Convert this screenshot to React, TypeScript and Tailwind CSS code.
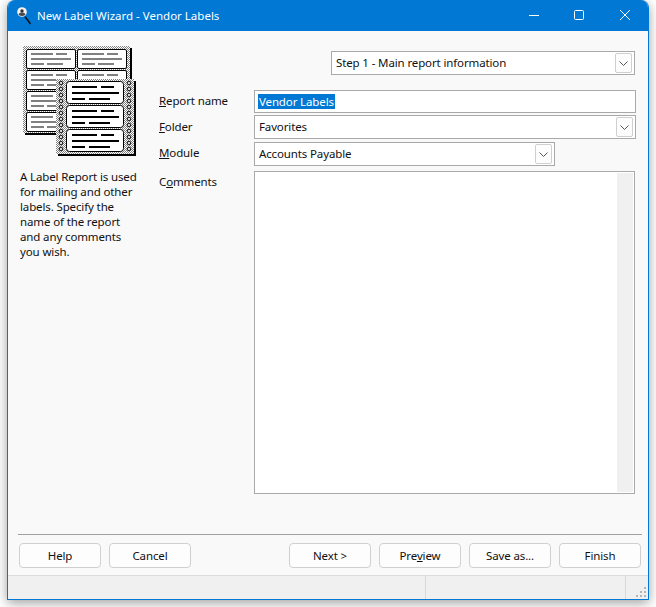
const ChevronDown = () => (
  <svg width="9" height="5" viewBox="0 0 9 5" fill="none" stroke="#555" strokeWidth="1">
    <path d="M0.5 0.5 L4.5 4.5 L8.5 0.5" />
  </svg>
);

const DropBtn = () => (
  <div className="flex h-[20px] w-[17px] items-center justify-center rounded-[2px] border border-[#cfcfcf] bg-[#fdfdfd]">
    <ChevronDown />
  </div>
);

const Select = ({ text, className }: { text: string; className: string }) => (
  <div className={`flex h-[24px] items-center justify-between border border-[#a9a9a9] bg-white pl-[4px] pr-[2px] ${className}`}>
    <span className="pb-[2px]">{text}</span>
    <DropBtn />
  </div>
);

const Btn = ({ children }: { children: React.ReactNode }) => (
  <button className="flex h-[25px] w-[82px] items-center justify-center rounded-[4px] border border-[#d0d0d0] bg-[#fdfdfd] text-[#111]">
    {children}
  </button>
);

const Label = ({ children, className }: { children: React.ReactNode; className?: string }) => (
  <div className={`w-[95px] shrink-0 ${className ?? ""}`}>{children}</div>
);

const rowOffsets = [0, 21, 42, 63];
const frontOffsets = [0, 24, 48];
const holes = Array.from({ length: 12 }, (_, i) => 83 + i * 6);

const ReportIcon = () => (
  <svg width="120" height="116" viewBox="20 44 120 116" shapeRendering="crispEdges">
    <defs>
      <pattern id="dither" width="2" height="2" patternUnits="userSpaceOnUse">
        <rect width="2" height="2" fill="#fff" />
        <rect width="1" height="1" fill="#808080" />
        <rect x="1" y="1" width="1" height="1" fill="#808080" />
      </pattern>
    </defs>
    <rect x="25" y="48" width="107" height="87" fill="#000" />
    <rect x="23" y="46" width="107" height="87" fill="url(#dither)" />
    {rowOffsets.map((dy) => (
      <g key={dy}>
        {[0, 51].map((dx) => (
          <g key={dx}>
            <rect x={26.5 + dx} y={49.5 + dy} width="49" height="19" rx="1.5" fill="#fff" stroke="#000" shapeRendering="auto" />
            <rect x={31 + dx} y={53 + dy} width="22" height="2" fill="#808080" />
            <rect x={56 + dx} y={53 + dy} width="11" height="2" fill="#808080" />
            <rect x={31 + dx} y={58 + dy} width="40" height="2" fill="#808080" />
            <rect x={31 + dx} y={63 + dy} width="13" height="2" fill="#808080" />
            <rect x={47 + dx} y={63 + dy} width="16" height="2" fill="#808080" />
          </g>
        ))}
      </g>
    ))}
    <rect x="58" y="81" width="78" height="75" fill="#000" />
    <rect x="56" y="79" width="78" height="75" fill="url(#dither)" />
    {holes.map((y) => (
      <g key={y} shapeRendering="auto">
        <circle cx="61" cy={y} r="1.8" fill="#d8d8d8" stroke="#000" strokeWidth="0.9" />
        <circle cx="129" cy={y} r="1.8" fill="#d8d8d8" stroke="#000" strokeWidth="0.9" />
      </g>
    ))}
    {frontOffsets.map((dy) => (
      <g key={dy}>
        <rect x="66.5" y={81.5 + dy} width="57" height="22" rx="3" fill="#fff" stroke="#000" shapeRendering="auto" />
        <rect x="72" y={86 + dy} width="25" height="2" fill="#000" />
        <rect x="101" y={86 + dy} width="13" height="2" fill="#000" />
        <rect x="72" y={92 + dy} width="47" height="2" fill="#000" />
        <rect x="72" y={98 + dy} width="13" height="2" fill="#000" />
        <rect x="89" y={98 + dy} width="21" height="2" fill="#000" />
      </g>
    ))}
  </svg>
);

const TitleIcon = () => (
  <svg width="16" height="18" viewBox="0 0 16 18">
    <path d="M9 9.5 L14.5 17" stroke="#111" strokeWidth="1.5" />
    <circle cx="6" cy="5" r="4.8" fill="#f2f2f2" />
    <circle cx="6" cy="4" r="1.7" fill="#3a2a20" />
    <path d="M2.6 8 Q3 5.6 6 5.6 Q9 5.6 9.4 8 Q6 10 2.6 8 Z" fill="#4a4a4a" />
  </svg>
);

const Grip = () => (
  <svg width="12" height="12" viewBox="0 0 12 12" fill="#b4b4b4" shapeRendering="crispEdges">
    <rect x="8" y="0" width="2" height="2" />
    <rect x="4" y="4" width="2" height="2" />
    <rect x="8" y="4" width="2" height="2" />
    <rect x="0" y="8" width="2" height="2" />
    <rect x="4" y="8" width="2" height="2" />
    <rect x="8" y="8" width="2" height="2" />
  </svg>
);

export default function App() {
  return (
    <div className="h-[607px] w-[656px] overflow-hidden bg-white pl-[7px] font-['Noto_Sans',sans-serif] text-[11.5px] leading-[15px] tracking-[-0.13px] text-[#111]">
      <div className="flex h-[600px] w-[642px] flex-col overflow-hidden rounded-t-[8px] border-x border-b border-[#0078d4] bg-[#f9f9f9] shadow-[0_3px_12px_rgba(0,0,0,0.38)]">
        {/* Title bar */}
        <div className="-mx-px flex h-[31px] shrink-0 items-center bg-[#0078d4] tracking-normal text-white">
          <div className="ml-[9px] mr-[4px] flex w-[16px]">
            <TitleIcon />
          </div>
          <span className="ml-[1px] pb-[1px]">New Label Wizard - Vendor Labels</span>
          <div className="ml-auto flex items-center pb-[1px]">
            <svg width="10" height="10" viewBox="0 0 10 10" className="mr-[35px]" stroke="#fff" fill="none">
              <path d="M0 5.5 H10" />
            </svg>
            <svg width="10" height="10" viewBox="0 0 10 10" className="mr-[36px]" stroke="#fff" fill="none">
              <rect x="0.5" y="0.5" width="9" height="9" rx="1" />
            </svg>
            <svg width="10" height="10" viewBox="0 0 10 10" className="mr-[19px]" stroke="#fff" fill="none">
              <path d="M0 0 L10 10 M10 0 L0 10" />
            </svg>
          </div>
        </div>

        {/* Main area */}
        <div className="flex flex-1 flex-col">
          <div className="flex flex-1">
            <div className="w-[151px] shrink-0 pl-[12px] pt-[13px]">
              <ReportIcon />
              <div className="mt-[9px]">
                <div>A Label Report is used</div>
                <div>for mailing and other</div>
                <div>labels. Specify the</div>
                <div>name of the report</div>
                <div>and any comments</div>
                <div>you wish.</div>
              </div>
            </div>

            <div className="flex flex-1 flex-col pt-[20px]">
              <Select text="Step 1 - Main report information" className="ml-[172px] w-[304px]" />
              <div className="mt-[15px] flex items-start">
                <Label className="pt-[3px]">
                  <u>R</u>eport name
                </Label>
                <div className="flex h-[23px] w-[382px] items-start border border-[#a9a9a9] bg-white pl-[3px] pt-[3px]">
                  <span className="bg-[#0078d4] px-[1px] text-white">Vendor Labels</span>
                </div>
              </div>
              <div className="mt-[2px] flex items-start">
                <Label className="pt-[4px]">
                  <u>F</u>older
                </Label>
                <Select text="Favorites" className="w-[382px]" />
              </div>
              <div className="mt-[3px] flex items-start">
                <Label className="pt-[3px]">
                  <u>M</u>odule
                </Label>
                <Select text="Accounts Payable" className="w-[301px]" />
              </div>
              <div className="mt-[5px] flex items-start">
                <Label className="pt-[3px]">
                  C<u>o</u>mments
                </Label>
                <div className="flex h-[323px] w-[381px] justify-end border border-[#a9a9a9] bg-white p-[1px]">
                  <div className="w-[16px] bg-[#f0f0f0]" />
                </div>
              </div>
            </div>
          </div>

          {/* Footer */}
          <div className="mb-[7px] ml-[10px] mr-[6px] h-[34px] border-t border-[#a0a0a0] pl-[1px] pr-[1px] pt-[8px]">
            <div className="flex">
              <div className="flex gap-[8px]">
                <Btn>Help</Btn>
                <Btn>Cancel</Btn>
              </div>
              <div className="ml-auto flex gap-[8px]">
                <Btn>Next &gt;</Btn>
                <Btn>
                  <span>
                    Pre<u>v</u>iew
                  </span>
                </Btn>
                <Btn>Save as...</Btn>
                <Btn>Finish</Btn>
              </div>
            </div>
          </div>
        </div>

        {/* Status bar */}
        <div className="flex h-[24px] shrink-0 border-t border-[#dcdcdc] bg-[#f0f0f0]">
          <div className="w-[418px] border-r border-[#d8d8d8]" />
          <div className="w-[200px] border-r border-[#d8d8d8]" />
          <div className="flex flex-1 items-end justify-end">
            <Grip />
          </div>
        </div>
      </div>
    </div>
  );
}
